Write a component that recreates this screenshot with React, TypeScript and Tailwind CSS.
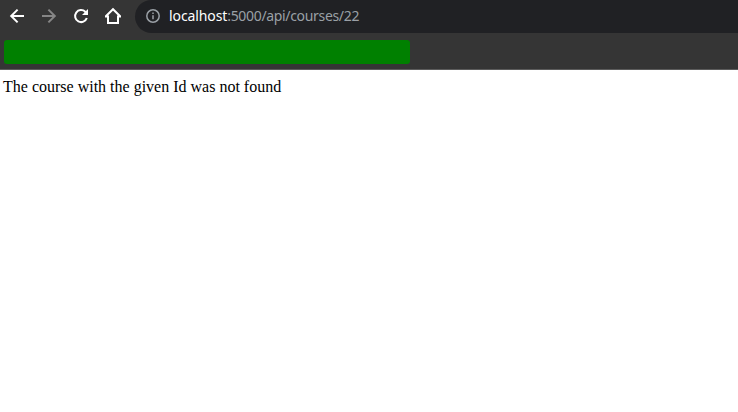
function NavIcon({ d, color }: { d: string; color: string }) {
  return (
    <svg className="size-5 shrink-0" viewBox="0 0 20 20" fill="none" stroke={color} strokeWidth="2">
      <path d={d} />
    </svg>
  );
}

export default function App() {
  return (
    <div className="flex h-[412px] w-[738px] flex-col overflow-hidden bg-white">
      <header className="flex h-[33px] shrink-0 items-start bg-[#353535]">
        <nav className="flex h-8 w-[135px] shrink-0 items-center gap-3 pl-[7px]">
          <NavIcon color="#fff" d="M17 10H4.5M10.6 3.6L4.2 10l6.4 6.4" />
          <NavIcon color="#868686" d="M3 10h12.5M9.4 3.6l6.4 6.4-6.4 6.4" />
          <svg className="size-5 shrink-0" viewBox="0 0 20 20" fill="none" stroke="#fff" strokeWidth="2">
            <path d="M15.8 12A6 6 0 1 1 14.3 5.8L15.3 7" />
            <path d="M17 3v6h-6z" fill="#fff" stroke="none" />
          </svg>
          <NavIcon color="#fff" d="M2 10.5h3V17h10v-6.5h3M2.6 10.5L10 3.2l7.4 7.3" />
        </nav>
        <div className="flex h-[33px] flex-1 items-start rounded-l-full bg-[#202124] pl-[10px] pt-[6px]">
          <svg className="mt-0.5 size-4 shrink-0" viewBox="0 0 16 16" fill="none" stroke="#9aa0a6" strokeWidth="1.5">
            <circle cx="8" cy="8" r="6.2" />
            <path d="M8 7.2v4M8 4.6v1.5" />
          </svg>
          <span className="ml-2 whitespace-nowrap font-['Noto_Sans',sans-serif] text-[14px] leading-[19px] tracking-[-0.33px] text-[#9aa0a6]">
            <span className="tracking-[-0.1px] text-white">localhost</span>:5000/api/courses/22
          </span>
        </div>
      </header>
      <div className="flex h-[37px] shrink-0 items-start border-b border-[#5c5c5c] bg-[#353535] pl-1 pt-[7px]">
        <div className="h-6 w-[406px] rounded-[3px] bg-[#008000]" />
      </div>
      <main className="px-[3px] pt-2 font-['Liberation_Serif',serif] text-[16px] leading-[18px] text-black">
        The course with the given Id was not found
      </main>
    </div>
  );
}
